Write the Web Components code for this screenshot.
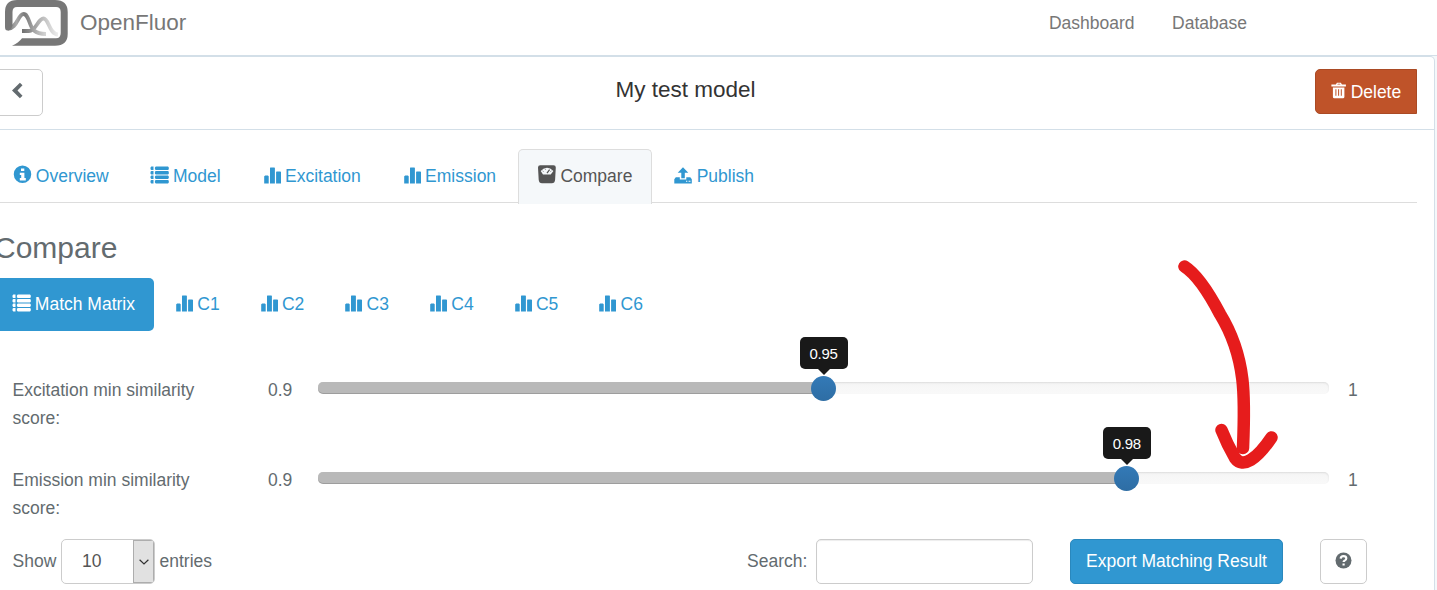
<!DOCTYPE html>
<html lang="en"><head><meta charset="utf-8"><title>OpenFluor</title>
<style>
html,body{margin:0;height:590px;overflow:hidden}
body{background:#fff;font:17.5px/25px "Liberation Sans",Arial,sans-serif;color:#636b6f}
</style></head><body>
<of-app></of-app>
<script>
const define=(name,css,html)=>customElements.define(name,class extends HTMLElement{
  connectedCallback(){
    if(this.shadowRoot)return;
    const root=this.attachShadow({mode:'open'});
    root.innerHTML=`<style>*{box-sizing:border-box}${css}</style>${typeof html==='function'?html(this):html}`;
  }
});
const ICONS={
  info:'<path fill-rule="evenodd" d="M8.500-.500a8.750 8.750 0 1 0 0 17.500A8.750 8.750 0 0 0 8.500-.500zM7 2.500h3.300v2.600H7zM5.800 6.700h4.600v5.400H11.800V14.500H5.800v-2.400h1.400V8.900H5.800z"/>',
  list:'<path d="M.3 .500h2.200v3.600H.3l-.8-.9V1.400zM.3 5h2.200v3.500H.3l-.8-.8V5.800zM.3 9.500h2.200v3.500H.3l-.8-.9v-1.700zM.3 13.900h2.200v3.600H.3l-.8-.9v-1.800zM4.800 .500h12.200l.8.900v1.800l-.8.900H4.800l-.9-.9V1.400zM4.800 5h12.200l.8.800v1.900l-.8.800H4.800l-.9-.8V5.800zM4.800 9.500h12.200l.8.900v1.700l-.8.900H4.800l-.9-.9v-1.700zM4.800 13.900h12.200l.8.900v1.800l-.8.900H4.800l-.9-.9v-1.800z"/>',
  stats:'<g transform="translate(.7 -.6)"><path d="M1.500 10h2.700l.8.900V18H.5v-7.100zM6.700 2h4l.5.500V18H6.300V2.500zM12.900 6h3.700l.7.500V18h-4.900V6.500z"/></g>',
  scale:'<path transform="translate(0 -.8)" fill-rule="evenodd" d="M2.300 0h13.200Q17.800 0 17.800 2.300l-.7 12.200Q16.800 18 13.800 18H4Q1 18 .7 14.500L0 2.300Q0 0 2.300 0zM2.700 5.700L5 9.200h7.700l2.700-3.500Q9-.8 2.700 5.700z"/><path d="M9 7.200l2.600-3.600" stroke="currentColor" stroke-width="1.200"/><path d="M4.500 4.700l1 1M7 2.700l.5 1M13.500 4.700l-1 1" stroke="currentColor" stroke-width=".7"/>',
  upload:'<path transform="translate(.3 -.8)" fill-rule="evenodd" d="M8.700 2l5.300 5.500h-3.500V13H7V7.500H3.400zM1.500 12h4v2.200H12V12h4l1.500 2v4.200H0V14zM11.700 15.500v1h1.300v-1zm2.600 0v1h1.900v-1z"/>',
  trash:'<path transform="translate(.4 .8)" fill-rule="evenodd" d="M5.500 1h4l1 1.700h4v2.100H0V2.700h4.500zm.9 1l-.5.700h3.200l-.5-.7zM1.500 5.700h11.500V15q0 1.500-1.500 1.500h-8.500Q1.500 16.500 1.500 15zM4 7.500V14h1V7.500zm2.700 0V14h1V7.500zm2.700 0V14h1V7.500z"/>',
  back:'<path d="M9.900.700l2.600 2.500-5 5.300 5 5.200-2.600 2.600L2 8.500z"/>',
  help:'<g transform="translate(0 .8)"><circle cx="8.500" cy="8.700" r="8"/><path d="M5.700 6.800Q5.800 4.300 8.500 4.300t2.800 2.100Q11.300 8.200 9.500 8.900q-.9.400-.9 1.300" fill="none" stroke="#fff" stroke-width="2.200"/><path fill="#fff" d="M7.500 11.700h2.200v2H7.500z"/></g>'
};
define('of-icon',':host{display:inline-block;width:1em;height:1em;vertical-align:-1px}svg{display:block;width:100%;height:100%;overflow:visible}',
  e=>`<svg viewBox="0 0 17.5 17.5" fill="currentColor">${ICONS[e.getAttribute('name')]}</svg>`);
define('of-logo',':host{display:block;width:64px;height:48px}svg{display:block}',
 `<svg width="64" height="48" fill="none"><defs>
 <linearGradient id="a" x1="4" y1="0" x2="46" y2="0" gradientUnits="userSpaceOnUse"><stop stop-color="#777"/><stop offset=".2" stop-color="#aaa"/><stop offset=".4" stop-color="#7a7a7a"/><stop offset=".7" stop-color="#b5b5b5"/><stop offset="1" stop-color="#e5e5e5"/></linearGradient>
 <linearGradient id="b" x1="18" y1="0" x2="54" y2="0" gradientUnits="userSpaceOnUse"><stop stop-color="#6f6f6f"/><stop offset=".5" stop-color="#b5b5b5"/><stop offset="1" stop-color="#eee"/></linearGradient></defs>
 <path d="M18 31H25C32 31 34 18.500 39.500 18.500C45 18.500 45 34 54 34.500" stroke="url(#b)" stroke-width="3.800"/>
 <path d="M4 28.500C13 29 14 14 19.500 14C25 14 25 26 30 30.500Q34 34 42 34" stroke="url(#a)" stroke-width="3.800"/>
 <path d="M1 27V12Q1 0 13 0H51Q63.700 0 63.700 12V34Q63.700 45.700 51 45.700H8Q14.500 43 18 38.300H52Q56.700 38.300 56.700 33V12Q56.700 7 52 7H13Q8.500 7 8.500 12V25.500Q7 30.500 3.500 30.500Q1 30.500 1 27z" fill="#777"/></svg>`);
define('of-header',`:host{display:flex;height:56px;border-bottom:1px solid #d3dfe8;padding:0 0 0 4px;color:#777}
 .brand{font-size:22.500px;line-height:28px;margin:9px 0 0 12px;flex:1}
 nav{display:flex;gap:37.500px;padding:11px 190px 0 0}`,
 `<of-logo></of-logo><span class="brand">OpenFluor</span><nav><span>Dashboard</span><span>Database</span></nav>`);
define('of-button',`:host{display:flex;align-items:center;justify-content:center;white-space:nowrap;border:1px solid #ccc;border-radius:5px;box-sizing:border-box;height:45px;background:#fff}
 :host([kind=danger]){background:#bf5329;border-color:#aa4a24;color:#fff;border-radius:5px 0 0 5px;width:102px}
 :host([kind=primary]){background:#3097d1;border-color:#2a88bd;color:#fff;width:213px}
 :host([kind=help]){width:47px}:host([kind=back]){width:49px;height:47px}
 :host([kind=danger]) span{padding-top:1px}`,`<span><slot></slot></span>`);
define('of-title',`:host{display:grid;grid-template-columns:49px 1fr 102px;height:73px;padding:12px 17px 0 0;margin-left:-6px;border-bottom:1px solid #d3dfe8;box-sizing:border-box}
 [name=trash]{margin:0 -2.500px 0 0}
 h1{font-size:22.500px;line-height:28px;font-weight:400;color:#333;margin:7px 0 0 13px;text-align:center}`,
 `<of-button kind="back"><of-icon name="back"></of-icon></of-button><h1>My test model</h1><of-button kind="danger"><of-icon name="trash"></of-icon> Delete</of-button>`);
define('of-tab',`:host{display:block;box-sizing:border-box;height:54px;padding:13px 18.750px 0;border:1px solid transparent;border-radius:5px 5px 0 0;color:#3097d1;white-space:nowrap;line-height:26px}
 of-icon{margin-right:-.1px}
 :host([active]){background:#f5f8fa;border-color:#ddd;border-bottom:0;color:#555;height:55px}
 :host([pill]){border:0;border-radius:5px;height:53px}
 :host([pill][active]){background:#3097d1;color:#fff}`,
 e=>`<of-icon name="${e.getAttribute('icon')}"></of-icon> <slot></slot>`);
define('of-tabs',`:host{display:flex;gap:2.500px;margin:19px 17px 0 -6.250px;height:54px;border-bottom:1px solid #ddd;box-sizing:border-box}
 :host([pills]){border:0;margin:0 0 0 -6.200px;height:53px}`,`<slot></slot>`);
define('of-slider',`:host{display:grid;grid-template-columns:255.500px 50px 1011px 1fr;height:90px;line-height:28px}
 .label{width:200px}.max{padding-left:19px}
 .track{position:relative;height:12px;margin-top:6px;border-radius:5px;background:linear-gradient(#f5f5f5,#f9f9f9);box-shadow:inset 0 1px 2px rgba(0,0,0,.1)}
 .fill{height:12px;background:#b9b9b9;border-radius:5px;box-shadow:inset 0 -1px rgba(0,0,0,.15)}
 .knob{position:absolute;top:-6px;width:25px;height:25px;border-radius:50%;margin-left:-12.500px;background:linear-gradient(#337ab7,#2e6da4)}
 .tip{position:absolute;top:-45px;width:48px;height:32px;margin-left:-24px;border-radius:5px;background:#191919;color:#fff;font-size:15px;line-height:33px;text-align:center;letter-spacing:-.25px}
 .tip:after{content:"";position:absolute;left:18px;top:32px;border:6px solid transparent;border-top-color:#191919;border-bottom:0}`,
 e=>{const p=(e.getAttribute('value')-.9)*1000;return `<span class="label"><slot></slot></span><span>0.9</span><div class="track"><div class="fill" style="width:${p}%"></div><div class="knob" style="left:${p}%"></div><div class="tip" style="left:${p}%">${e.getAttribute('value')}</div></div><span class="max">1</span>`});
define('of-select',`:host{display:flex;width:94px;height:45px;border:1px solid #ccc;border-radius:5px;box-sizing:border-box;overflow:hidden;line-height:43px;color:#555}
 span{flex:1;padding-left:20px}i{width:21px;background:#e1e1e1;border:1px solid #adadad;display:flex;align-items:center;justify-content:center}`,
 `<span><slot></slot></span><i><svg width="10" height="6" fill="none" stroke="#333" stroke-width="1.200"><path d="M.6.700L5 5 9.400.700"/></svg></i>`);
define('of-toolbar',`:host{display:grid;grid-template-columns:48.500px 94px 592px 69px 217px 213px 47px;align-items:center;height:45px}
 .entries{padding-left:4.500px}input{width:217px;height:45px;border:1px solid #ccc;border-radius:5px;box-shadow:inset 0 1px 1px rgba(0,0,0,.075);background:#fff;margin:0}
 .export{margin-left:37px}.help{margin-left:74px}`,
 `<span>Show</span><of-select>10</of-select><span class="entries">entries</span><span>Search:</span><input aria-label="Search"><of-button class="export" kind="primary">Export Matching Result</of-button><of-button class="help" kind="help"><of-icon name="help"></of-icon></of-button>`);
define('of-arrow',`:host{position:absolute;left:1170px;top:250px;width:120px;height:230px;pointer-events:none}`,
 `<svg width="120" height="230" fill="none" stroke="#e61c1c" stroke-width="12.500" stroke-linecap="round" stroke-linejoin="round"><path d="M14.500 16.500C28 25 40 45 50 64C77 108 75 150 73 198"/><path d="M51.500 180C57 194 61 201 65 208C73 219 87 209 101.500 187.500"/></svg>`);
define('of-app',`:host{display:block;position:relative;height:590px;overflow:hidden}
 .page{background:#f5f8fa;height:534px}.panel{width:1435px;height:550px;background:#fff;border:1px solid #d3dfe8;border-left:0;border-radius:0 5px 0 0}
 h2{font-size:30px;font-weight:400;line-height:36px;letter-spacing:0;margin:27px 0 12px -6px}
 .sliders{padding:45px 0 0 12.500px}.tools{padding:0 0 0 12.500px;margin-top:-17px}`,
 `<of-header></of-header><div class="page"><div class="panel"><of-title></of-title>
 <of-tabs><of-tab icon="info">Overview</of-tab><of-tab icon="list">Model</of-tab><of-tab icon="stats">Excitation</of-tab><of-tab icon="stats">Emission</of-tab><of-tab icon="scale" active>Compare</of-tab><of-tab icon="upload">Publish</of-tab></of-tabs>
 <h2>Compare</h2>
 <of-tabs pills><of-tab pill active icon="list">Match Matrix</of-tab>${[1,2,3,4,5,6].map(n=>`<of-tab pill icon="stats">C${n}</of-tab>`).join('')}</of-tabs>
 <div class="sliders"><of-slider value="0.95">Excitation min similarity score:</of-slider><of-slider value="0.98">Emission min similarity score:</of-slider></div>
 <div class="tools"><of-toolbar></of-toolbar></div></div></div><of-arrow></of-arrow>`);
</script></body></html>
